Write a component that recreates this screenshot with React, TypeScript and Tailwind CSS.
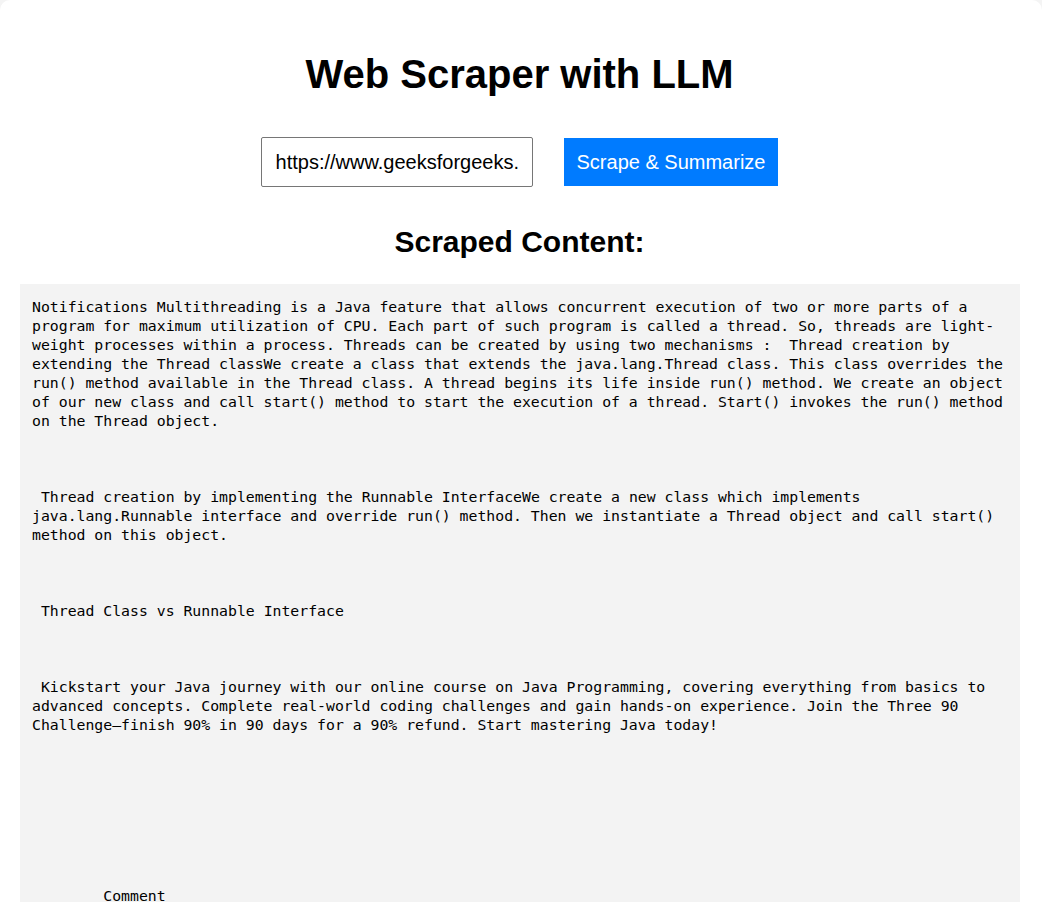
import React from "react";

const scraped = `Notifications Multithreading is a Java feature that allows concurrent execution of two or more parts of a program for maximum utilization of CPU. Each part of such program is called a thread. So, threads are light-weight processes within a process. Threads can be created by using two mechanisms :  Thread creation by extending the Thread classWe create a class that extends the java.lang.Thread class. This class overrides the run() method available in the Thread class. A thread begins its life inside run() method. We create an object of our new class and call start() method to start the execution of a thread. Start() invokes the run() method on the Thread object.



 Thread creation by implementing the Runnable InterfaceWe create a new class which implements java.lang.Runnable interface and override run() method. Then we instantiate a Thread object and call start() method on this object.



 Thread Class vs Runnable Interface



 Kickstart your Java journey with our online course on Java Programming, covering everything from basics to advanced concepts. Complete real-world coding challenges and gain hands-on experience. Join the Three 90 Challenge—finish 90% in 90 days for a 90% refund. Start mastering Java today!








        Comment
        More info
        Advertise with us
`;

export default function App() {
  return (
    <div className="min-h-screen bg-[#f4f4f4]">
      <div className="w-[1042px] rounded-[10px] bg-white pl-5 pr-[23px] pt-[51px] pb-5 font-['Liberation_Sans',Arial,sans-serif] text-black">
        <h1 className="m-0 text-center text-[40px] font-bold leading-[46px]">
          Web Scraper with LLM
        </h1>

        <div className="mt-[40px] flex items-center justify-center gap-[31px]">
          <input
            type="text"
            readOnly
            value="https://www.geeksforgeeks.org/java/multithreading-in-java/"
            className="h-[50px] w-[272px] rounded-[2px] border border-[#767676] bg-white px-[14px] text-[20px] text-black outline-none"
          />
          <button className="h-12 bg-[#007bff] px-[13px] text-[20px] text-white">
            Scrape &amp; Summarize
          </button>
        </div>

        <h2 className="mt-[38px] text-center text-[30px] font-bold leading-[34px]">
          Scraped Content:
        </h2>

        <pre className="mt-[25px] w-[1000px] whitespace-pre-wrap break-words bg-[#f3f3f3] px-3 pt-[13px] pb-3 font-['DejaVu_Sans_Mono',monospace] text-[14.8px] leading-[19px] text-black">
          {scraped}
        </pre>
      </div>
    </div>
  );
}
